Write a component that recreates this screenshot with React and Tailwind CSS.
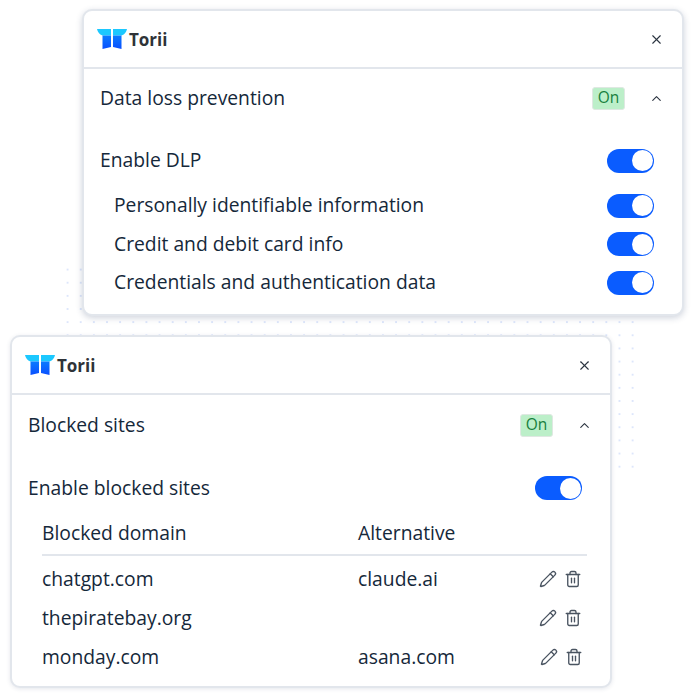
import { X, ChevronUp, Pencil, Trash2 } from "lucide-react";

const dlpRows = ["Personally identifiable information", "Credit and debit card info", "Credentials and authentication data"];
const blockedRows = [
  { domain: "chatgpt.com", alt: "claude.ai" },
  { domain: "thepiratebay.org", alt: "" },
  { domain: "monday.com", alt: "asana.com", nudge: true },
];

function Logo() {
  return (
    <div className="flex items-center">
      <svg width="31" height="20" viewBox="0 0 31 20">
        <defs>
          <linearGradient id="pillar" x1="0" y1="0" x2="0" y2="1">
            <stop offset="0" stopColor="#0b7bff" />
            <stop offset="1" stopColor="#0a4fff" />
          </linearGradient>
        </defs>
        <path d="M0 0H14V6.5H6.5C3.5 6.5 1 4 0 0Z" fill="#1cc8ff" />
        <path d="M16 0H30C29 4 26.5 6.5 23.5 6.5H16Z" fill="#1cc8ff" />
        <path d="M5.5 6.5H14V18L5.5 20Z" fill="url(#pillar)" />
        <path d="M16 6.5H24.5V20L16 18Z" fill="url(#pillar)" />
      </svg>
      <span className="ml-[1px] mt-[1px] text-[17px] font-bold leading-none text-[#2f3338]">Torii</span>
    </div>
  );
}

function Toggle() {
  return (
    <div className="flex h-6 w-[47px] items-center justify-end rounded-full bg-[#0a5cff] p-[1.5px]">
      <div className="h-[21px] w-[21px] rounded-full bg-white" />
    </div>
  );
}

function Badge() {
  return <span className="flex h-[23px] w-[33px] items-center justify-center rounded-[3px] border border-[#dfe8e2] bg-[#bcefc9] text-[15.5px] text-[#17803d]">On</span>;
}

function CardHeader({ title, rowClass }) {
  return (
    <>
      <div className="flex h-[58px] items-center justify-between border-b-2 border-[#e2e6ec] pl-[13px] pr-[18px]">
        <Logo />
        <X size={15} strokeWidth={1.8} className="text-[#2b3440]" />
      </div>
      <div className={rowClass}>
        <span className="flex-1">{title}</span>
        <Badge />
        <ChevronUp size={15} strokeWidth={1.8} className="ml-[24px] text-[#2b3440]" />
      </div>
    </>
  );
}

export default function App() {
  return (
    <div className="relative h-[700px] w-[700px] overflow-hidden bg-white font-['Open_Sans',sans-serif] text-[19.3px] text-[#15283a]">
      {/* dotted backdrop behind the cards */}
      <div className="absolute left-[61px] top-[263px] h-[210px] w-[579px] bg-[radial-gradient(circle,#dde6fb_1px,transparent_1.4px)] bg-[size:13.15px_13.15px]" />

      <div className="relative ml-[82px] pt-[9px]">
        <section className="h-[307px] w-[602px] rounded-[10px] border-2 border-[#e2e6ec] bg-white shadow-[0_2px_6px_rgba(40,60,100,0.22)]">
          <CardHeader title="Data loss prevention" rowClass="flex h-[58px] items-center pl-[16px] pr-[18px]" />
          <div className="flex h-[59.5px] items-center justify-between pl-[16px] pr-[28px] pt-[7.5px]">
            <span>Enable DLP</span>
            <Toggle />
          </div>
          <div className="pl-[30px] pr-[28px]">
            {dlpRows.map((row) => (
              <div key={row} className="flex h-[38.5px] items-center justify-between">
                <span>{row}</span>
                <Toggle />
              </div>
            ))}
          </div>
        </section>
      </div>

      <div className="relative ml-[10px] mt-[19px]">
        <section className="h-[353px] w-[602px] rounded-[10px] border-2 border-[#e2e6ec] bg-white shadow-[0_1px_4px_rgba(40,60,100,0.12)]">
          <CardHeader title="Blocked sites" rowClass="flex h-[60px] items-center pl-[16px] pr-[18px]" />
          <div className="flex h-[57px] items-center justify-between pl-[16px] pr-[28px] pt-[9px]">
            <span>Enable blocked sites</span>
            <Toggle />
          </div>
          <div className="pl-[30px] pr-[23px]">
            <div className="flex h-[44px] items-center border-b-2 border-[#e2e6ec]">
              <span className="w-[316px]">Blocked domain</span>
              <span>Alternative</span>
            </div>
            {blockedRows.map((row) => (
              <div key={row.domain} className="flex h-[39px] items-center pt-[7px]">
                <span className="w-[316px]">{row.domain}</span>
                <span className="flex-1">{row.alt}</span>
                <div className={row.nudge ? "mr-[4px] flex items-center gap-[7px] text-[#4a5461]" : "mr-[5px] flex items-center gap-[7px] text-[#4a5461]"}>
                  <Pencil size={18} strokeWidth={1.8} />
                  <Trash2 size={18} strokeWidth={1.8} />
                </div>
              </div>
            ))}
          </div>
        </section>
      </div>
    </div>
  );
}
